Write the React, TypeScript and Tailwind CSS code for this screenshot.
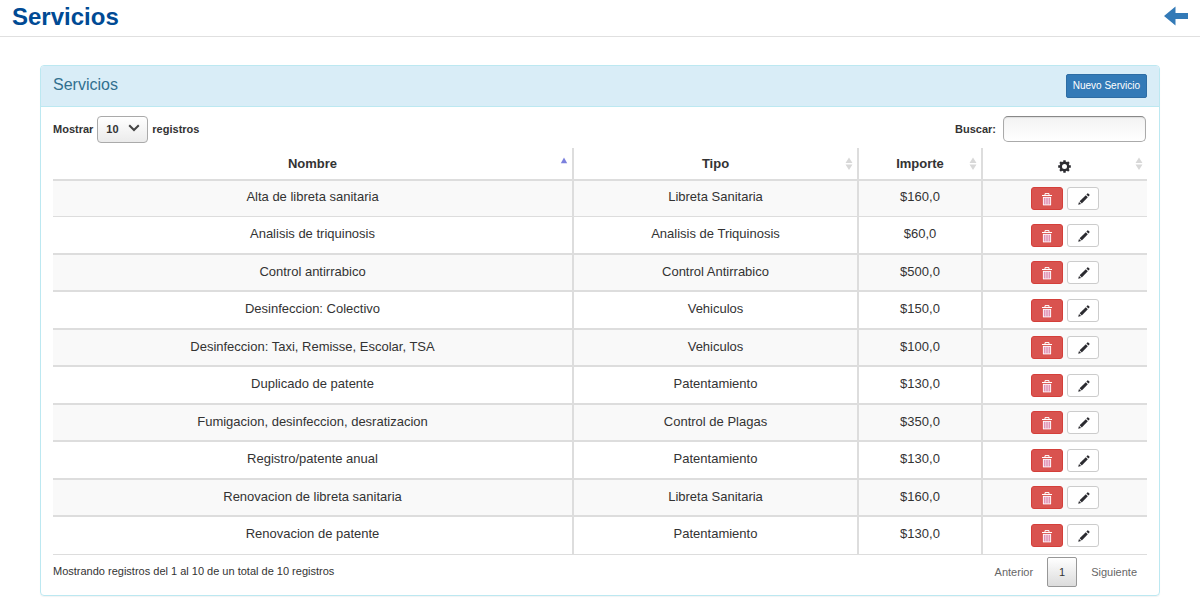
import React from "react";

type Service = { name: string; kind: string; price: string };

const services: Service[] = [
  { name: "Alta de libreta sanitaria", kind: "Libreta Sanitaria", price: "$160,0" },
  { name: "Analisis de triquinosis", kind: "Analisis de Triquinosis", price: "$60,0" },
  { name: "Control antirrabico", kind: "Control Antirrabico", price: "$500,0" },
  { name: "Desinfeccion: Colectivo", kind: "Vehiculos", price: "$150,0" },
  { name: "Desinfeccion: Taxi, Remisse, Escolar, TSA", kind: "Vehiculos", price: "$100,0" },
  { name: "Duplicado de patente", kind: "Patentamiento", price: "$130,0" },
  { name: "Fumigacion, desinfeccion, desratizacion", kind: "Control de Plagas", price: "$350,0" },
  { name: "Registro/patente anual", kind: "Patentamiento", price: "$130,0" },
  { name: "Renovacion de libreta sanitaria", kind: "Libreta Sanitaria", price: "$160,0" },
  { name: "Renovacion de patente", kind: "Patentamiento", price: "$130,0" },
];

function ArrowLeft() {
  return (
    <svg width="24" height="20" viewBox="0 0 24 20" fill="#337ab7" aria-hidden="true">
      <path d="M0 10 11.5 0.5V7H24V13H11.5V19.5Z" />
    </svg>
  );
}

function Trash() {
  return (
    <svg width="12" height="13" viewBox="0 0 12 13" aria-hidden="true">
      <path d="M4 2V0.6H8V2" fill="none" stroke="#fff" strokeWidth="1" />
      <path d="M1 2H11V3H1Z" fill="#fff" />
      <path d="M2 4H10V12H2Z" fill="#e093b4" />
      <path d="M2.4 4V12M9.6 4V12M2 4.4H10M2 11.9H10" stroke="#fff" strokeWidth="0.9" />
      <path d="M4.8 5V12M7.2 5V12" stroke="#f8dde6" strokeWidth="0.9" />
    </svg>
  );
}

function Pencil() {
  return (
    <svg width="12" height="12" viewBox="0 0 12 12" fill="#2b2b30" aria-hidden="true">
      <path d="M0.2 11.8 1 8.9 3.1 11Z" />
      <path d="M1.6 8.2 7.8 2.2 9.8 4.2 3.8 10.4Z" />
      <path d="M8.4 1.6 9.4 0.6Q9.9 0.1 10.5 0.7L11.4 1.6Q11.9 2.1 11.4 2.6L10.4 3.6Z" />
    </svg>
  );
}

function Cog() {
  return (
    <svg width="13" height="13" viewBox="-6.5 -6.5 13 13" aria-hidden="true">
      <circle r="3.7" fill="none" stroke="#2b2b30" strokeWidth="2.4" />
      <g stroke="#2b2b30" strokeWidth="2.4">
        <path d="M0-6.3V-4M0 4V6.3M-6.3 0H-4M4 0H6.3" />
        <path d="M-4.4-4.4-3-3M4.4 4.4 3 3M-4.4 4.4-3 3M4.4-4.4 3-3" />
      </g>
    </svg>
  );
}

function SortMark({ active = false }: { active?: boolean }) {
  return (
    <svg
      className="absolute top-[9px] right-[4px]"
      width="8"
      height="14"
      viewBox="0 0 8 14"
      aria-hidden="true"
    >
      {active ? (
        <path d="M0.8 6.2 4 0.5 7.2 6.2Z" fill="#7b80dd" />
      ) : (
        <path d="M0.5 6 4 0.5 7.5 6ZM0.5 7.5H7.5L4 13Z" fill="#d8d8d8" />
      )}
    </svg>
  );
}

const th = "relative h-[33px] border-b-2 border-[#ddd] p-0 text-center align-middle font-bold";
const cell = "border-[#ddd] p-0 text-center align-top group-first:border-b border-b-2 group-last:border-b";
const textCell = "border-r-2 pt-2 group-first:pt-[7px]";

export default function App() {
  return (
    <div className="bg-white font-['Liberation_Sans',Arial,sans-serif] text-[13px] leading-[18px] text-[#333]">
      <header className="flex h-[37px] items-start justify-between border-b border-[#e0e0e0] pr-3 pl-3">
        <h1 className="pt-[3px] text-2xl leading-7 font-bold text-[#004a94]">Servicios</h1>
        <a href="#volver" aria-label="Volver" className="pt-[6px]">
          <ArrowLeft />
        </a>
      </header>

      <main className="px-10 pt-7 pb-4">
        <section className="rounded border border-[#bce8f1] shadow-[0_1px_1px_rgba(0,0,0,0.05)]">
          <div className="flex h-[41px] items-center justify-between rounded-t-[3px] border-b border-[#bce8f1] bg-[#d9edf7] px-3">
            <h2 className="pb-[3px] text-base leading-5 text-[#31708f]">Servicios</h2>
            <button className="h-6 rounded-[2px] border border-[#2e6da4] bg-[#337ab7] px-[6px] text-[10px] leading-4 text-white">
              Nuevo Servicio
            </button>
          </div>

          <div className="px-3 pb-2">
            <div className="flex h-[41px] items-start justify-between pt-[9px] text-[11px] font-bold">
              <label className="flex items-center gap-1">
                <span className="pb-[2px]">Mostrar</span>
                <span className="relative flex items-center">
                  <select
                    defaultValue="10"
                    className="h-[27px] w-[51px] appearance-none rounded-[4px] border border-[#aaa] bg-linear-to-b from-white to-[#ebebeb] pb-[2px] pl-2 text-[11px] font-bold"
                  >
                    <option>10</option>
                    <option>25</option>
                    <option>50</option>
                    <option>100</option>
                  </select>
                  <svg
                    className="pointer-events-none absolute right-[8px] bottom-[11px]"
                    width="12"
                    height="8"
                    viewBox="0 0 12 8"
                    fill="none"
                    stroke="#444"
                    strokeWidth="2"
                    aria-hidden="true"
                  >
                    <path d="M1.2 1.2 6 6 10.8 1.2" />
                  </svg>
                </span>
                <span className="pb-[2px]">registros</span>
              </label>
              <label className="flex items-center gap-[7px] pr-px">
                Buscar:
                <input
                  type="search"
                  className="h-[26px] w-[143px] rounded-[5px] border border-[#aaa] border-t-[#888] bg-linear-to-b from-[#f3f3f3] to-white px-2 font-normal shadow-[inset_0_1px_1px_rgba(0,0,0,0.08)]"
                />
              </label>
            </div>

            <table className="w-full table-fixed border-separate border-spacing-0">
              <colgroup>
                <col />
                <col className="w-[285px]" />
                <col className="w-[124px]" />
                <col className="w-[164px]" />
              </colgroup>
              <thead>
                <tr>
                  <th className={`${th} border-r-2`}>
                    Nombre
                    <SortMark active />
                  </th>
                  <th className={`${th} border-r-2`}>
                    Tipo
                    <SortMark />
                  </th>
                  <th className={`${th} border-r-2`}>
                    Importe
                    <SortMark />
                  </th>
                  <th className={th} aria-label="Acciones">
                    <span className="flex justify-center pt-[6px] pr-px">
                      <Cog />
                    </span>
                    <SortMark />
                  </th>
                </tr>
              </thead>
              <tbody>
                {services.map((s) => (
                  <tr
                    key={s.name}
                    className="group h-[37px] odd:bg-[#f9f9f9] first:h-[36px] even:h-[38px]"
                  >
                    <td className={`${cell} ${textCell}`}>{s.name}</td>
                    <td className={`${cell} ${textCell}`}>{s.kind}</td>
                    <td className={`${cell} ${textCell}`}>{s.price}</td>
                    <td className={`${cell} pt-[7px] group-odd:pt-[6px]`}>
                      <div className="flex justify-center gap-1">
                        <button
                          aria-label="Eliminar"
                          className="flex h-[23px] w-8 items-center justify-center rounded-[3px] border border-[#d43f3a] bg-[#d9534f] pt-px"
                        >
                          <Trash />
                        </button>
                        <button
                          aria-label="Editar"
                          className="flex h-[23px] w-8 items-center justify-center rounded-[3px] border border-[#ccc] bg-white pt-px pl-px"
                        >
                          <Pencil />
                        </button>
                      </div>
                    </td>
                  </tr>
                ))}
              </tbody>
            </table>

            <div className="flex items-start justify-between pt-[2px] text-[11px]">
              <p className="pt-[5px]">Mostrando registros del 1 al 10 de un total de 10 registros</p>
              <nav className="flex items-center pr-[10px] text-[#666]" aria-label="Paginas">
                <button className="pr-[14px]">Anterior</button>
                <button className="h-[30px] w-[30px] rounded-[2px] border border-[#979797] bg-linear-to-b from-white to-[#dcdcdc] text-[#333]">
                  1
                </button>
                <button className="pl-[14px]">Siguiente</button>
              </nav>
            </div>
          </div>
        </section>
      </main>
    </div>
  );
}
